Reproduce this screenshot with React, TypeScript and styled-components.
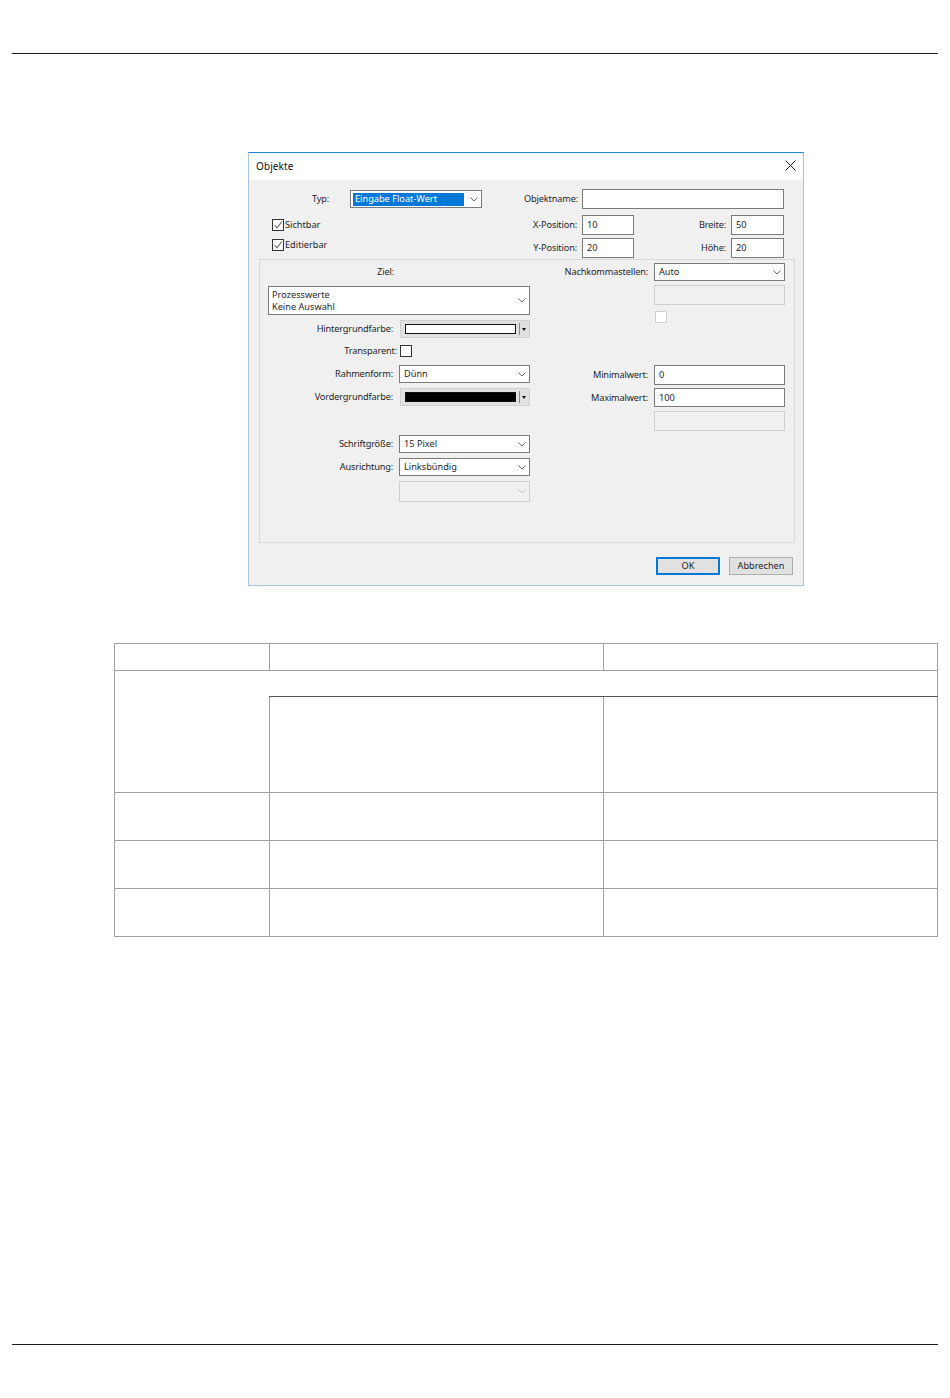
import React from "react";
import styled, { createGlobalStyle } from "styled-components";

const Global = createGlobalStyle`
  html, body { margin: 0; padding: 0; background: #fff; }
  body { font-family: "Noto Sans", "DejaVu Sans", sans-serif; }
`;

const Page = styled.div`
  width: 950px; height: 1398px; display: flex; flex-direction: column; box-sizing: border-box;
  padding: 53px 12px 53px; overflow: hidden;
`;
const Rule = styled.hr`
  margin: 0; border: 0; height: 1px; background: #1c1c1c; flex: none;
`;
const Spacer = styled.div`flex: 1;`;
const Dialog = styled.div`
  margin: 98px 0 0 236px; width: 556px; height: 434px; box-sizing: border-box; flex: none;
  border: 1px solid #a9c3d8; border-top-color: #1b84d8; background: #f0f0f0;
  font-size: 9.2px; color: #1f1f1f; line-height: 12px;
`;
const TitleBar = styled.div`
  height: 27px; box-sizing: border-box; background: #fff; display: flex; align-items: center; justify-content: space-between;
  padding: 0 7px 2px; font-size: 10px; color: #111; letter-spacing: .1px;
`;
const Close = styled.svg`width: 11px; height: 11px; stroke: #222; stroke-width: 1; fill: none;`;
const TopSection = styled.div`display: flex; height: 79px;`;
const TopLeft = styled.div`width: 271px; flex: none;`;
const TopRight = styled.div`flex: 1; padding-top: 9px;`;
const Row = styled.div<{ $top?: number; $left?: number }>`
  display: flex; align-items: center;
  margin-top: ${p => p.$top ?? 0}px; margin-left: ${p => p.$left ?? 0}px;
`;
const Label = styled.span<{ $w: number; $gap: number }>`
  flex: none; width: ${p => p.$w}px; margin-right: ${p => p.$gap}px; text-align: right; white-space: nowrap;
  letter-spacing: -.15px;
`;
const Input = styled.div<{ $w: number; $h?: number; $off?: boolean }>`
  flex: none; box-sizing: border-box; width: ${p => p.$w}px; height: ${p => p.$h ?? 20}px;
  background: ${p => (p.$off ? "#f0f0f0" : "#fff")};
  border: 1px solid ${p => (p.$off ? "#cfcfcf" : "#7a7a7a")};
  padding: 0 4px; display: flex; align-items: center; white-space: nowrap;
`;
const Select = styled(Input)`justify-content: space-between; padding-right: 3px;`;
const Chevron = styled.svg<{ $off?: boolean }>`
  width: 8px; height: 5px; flex: none; fill: none; stroke-width: 1;
  stroke: ${p => (p.$off ? "#c4c4c4" : "#666")};
`;
const Highlight = styled.span`
  background: #0078d7; color: #fff; width: 111px; height: 13px; line-height: 12px; padding-left: 2px;
  margin-left: -2px; box-sizing: border-box;
`;
const DisabledFill = styled.span`flex: 1; height: 100%; background: #f0f0f0; margin: 0 4px 0 -4px;`;
const ComboText = styled.div`line-height: 12px; margin-left: -1px;`;
const Check = styled.div<{ $off?: boolean }>`
  flex: none; width: 12px; height: 12px; box-sizing: border-box;
  border: 1px solid ${p => (p.$off ? "#cfcfcf" : "#333")}; background: #fff;
  display: flex; align-items: center; justify-content: center;
`;
const Tick = styled.svg`width: 10px; height: 10px; fill: none; stroke: #666; stroke-width: 1.1;`;
const CheckText = styled.span`margin-left: 1px;`;
const Group = styled.div`
  margin-left: 10px; width: 536px; height: 284px; box-sizing: border-box;
  border: 1px solid #d9d9d9; display: flex;
`;
const GroupLeft = styled.div`width: 280px; flex: none;`;
const GroupRight = styled.div`flex: 1;`;
const ColorButton = styled.div`
  flex: none; box-sizing: border-box; width: 130px; height: 18px; background: #e1e1e1; border: 1px solid #d0d0d0;
  display: flex; align-items: center; padding-left: 4px;
`;
const Swatch = styled.div<{ $color: string }>`
  width: 111px; height: 10px; box-sizing: border-box; border: 1px solid #111; background: ${p => p.$color};
`;
const Divider = styled.span`width: 1px; height: 12px; background: #888; margin-left: 3px;`;
const Arrow = styled.span`
  margin-left: 2px; width: 0; height: 0;
  border-left: 2.5px solid transparent; border-right: 2.5px solid transparent; border-top: 3px solid #111;
`;
const Buttons = styled.div`display: flex; justify-content: flex-end; gap: 9px; margin: 14px 10px 0 0;`;
const Button = styled.div<{ $primary?: boolean }>`
  width: 64px; height: 18px; box-sizing: border-box; background: #e1e1e1;
  border: ${p => (p.$primary ? "2px solid #0078d7" : "1px solid #adadad")};
  display: flex; align-items: center; justify-content: center;
`;
const Table = styled.table`
  margin: 57px 0 0 102px; width: 823px; border-collapse: collapse; table-layout: fixed; flex: none;
`;
const Cell = styled.td`border: 1px solid #a0a0a0; padding: 0;`;
const SpanLabelCell = styled(Cell)`border-right: none;`;
const SpanHeadCell = styled(Cell)`border-left: none; border-bottom-color: #555;`;
const SubCell = styled(Cell)`border-top-color: #555;`;
const TableRow = styled.tr<{ $h: number }>`height: ${p => p.$h}px;`;

const Down = ({ off }: { off?: boolean }) => (
  <Chevron $off={off} viewBox="0 0 8 5"><path d="M0.5 0.5 L4 4 L7.5 0.5" /></Chevron>
);
const Checked = () => (
  <Check><Tick viewBox="0 0 10 10"><path d="M1.5 5 L4 7.8 L8.8 1.5" /></Tick></Check>
);

export default function App() {
  return (
    <Page>
      <Global />
      <Rule />
      <Dialog>
        <TitleBar>
          <span>Objekte</span>
          <Close viewBox="0 0 11 11"><path d="M0.5 0.5 L10.5 10.5 M10.5 0.5 L0.5 10.5" /></Close>
        </TitleBar>
        <TopSection>
          <TopLeft>
            <Row $top={10}>
              <Label $w={80} $gap={21}>Typ:</Label>
              <Select $w={132} $h={18}><Highlight>Eingabe Float-Wert</Highlight><Down /></Select>
            </Row>
            <Row $top={11} $left={23}><Checked /><CheckText>Sichtbar</CheckText></Row>
            <Row $top={8} $left={23}><Checked /><CheckText>Editierbar</CheckText></Row>
          </TopLeft>
          <TopRight>
            <Row>
              <Label $w={58} $gap={4}>Objektname:</Label>
              <Input $w={202} />
            </Row>
            <Row $top={6}>
              <Label $w={57} $gap={5}>X-Position:</Label>
              <Input $w={52}>10</Input>
              <Label $w={92} $gap={5}>Breite:</Label>
              <Input $w={53}>50</Input>
            </Row>
            <Row $top={3}>
              <Label $w={57} $gap={5}>Y-Position:</Label>
              <Input $w={52}>20</Input>
              <Label $w={92} $gap={5}>Höhe:</Label>
              <Input $w={53}>20</Input>
            </Row>
          </TopRight>
        </TopSection>
        <Group>
          <GroupLeft>
            <Row $top={6}><Label $w={134} $gap={0}>Ziel:</Label></Row>
            <Row $top={8} $left={8}>
              <Select $w={262} $h={29}>
                <ComboText>Prozesswerte<br />Keine Auswahl</ComboText>
                <Down />
              </Select>
            </Row>
            <Row $top={5}>
              <Label $w={133} $gap={7}>Hintergrundfarbe:</Label>
              <ColorButton><Swatch $color="#fff" /><Divider /><Arrow /></ColorButton>
            </Row>
            <Row $top={7}>
              <Label $w={137} $gap={3}>Transparent:</Label>
              <Check />
            </Row>
            <Row $top={8}>
              <Label $w={133} $gap={6}>Rahmenform:</Label>
              <Select $w={131} $h={18}>Dünn<Down /></Select>
            </Row>
            <Row $top={5}>
              <Label $w={133} $gap={7}>Vordergrundfarbe:</Label>
              <ColorButton><Swatch $color="#000" /><Divider /><Arrow /></ColorButton>
            </Row>
            <Row $top={29}>
              <Label $w={133} $gap={6}>Schriftgröße:</Label>
              <Select $w={131} $h={18}>15 Pixel<Down /></Select>
            </Row>
            <Row $top={5}>
              <Label $w={133} $gap={6}>Ausrichtung:</Label>
              <Select $w={131} $h={18}>Linksbündig<Down /></Select>
            </Row>
            <Row $top={5} $left={139}>
              <Select $w={131} $h={21} $off><DisabledFill /><Down off /></Select>
            </Row>
          </GroupLeft>
          <GroupRight>
            <Row $top={3}>
              <Label $w={108} $gap={6}>Nachkommastellen:</Label>
              <Select $w={131} $h={18}>Auto<Down /></Select>
            </Row>
            <Row $top={4} $left={114}><Input $w={131} $off /></Row>
            <Row $top={6} $left={115}><Check $off /></Row>
            <Row $top={42}>
              <Label $w={108} $gap={6}>Minimalwert:</Label>
              <Input $w={131}>0</Input>
            </Row>
            <Row $top={3}>
              <Label $w={108} $gap={6}>Maximalwert:</Label>
              <Input $w={131} $h={19}>100</Input>
            </Row>
            <Row $top={4} $left={114}><Input $w={131} $off /></Row>
          </GroupRight>
        </Group>
        <Buttons>
          <Button $primary>OK</Button>
          <Button>Abbrechen</Button>
        </Buttons>
      </Dialog>
      <Table>
        <colgroup>
          <col style={{ width: 155 }} />
          <col style={{ width: 334 }} />
          <col style={{ width: 334 }} />
        </colgroup>
        <tbody>
          <TableRow $h={27}><Cell /><Cell /><Cell /></TableRow>
          <TableRow $h={26}><SpanLabelCell rowSpan={2} /><SpanHeadCell colSpan={2} /></TableRow>
          <TableRow $h={96}><SubCell /><SubCell /></TableRow>
          <TableRow $h={48}><Cell /><Cell /><Cell /></TableRow>
          <TableRow $h={48}><Cell /><Cell /><Cell /></TableRow>
          <TableRow $h={48}><Cell /><Cell /><Cell /></TableRow>
        </tbody>
      </Table>
      <Spacer />
      <Rule />
    </Page>
  );
}
